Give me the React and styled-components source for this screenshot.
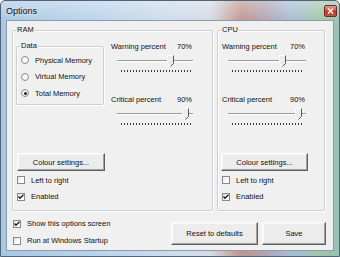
import React from 'react';
import styled, { createGlobalStyle } from 'styled-components';

const Global = createGlobalStyle`
  html, body { margin: 0; padding: 0; }
  body {
    width: 340px; height: 257px; overflow: hidden;
    font-family: "Liberation Sans", Arial, sans-serif;
    font-size: 7.5px; color: #111;
  }
`;

const Window = styled.div`
  width: 340px; height: 257px; box-sizing: border-box;
  display: flex; flex-direction: column;
  border: 1px solid #4f6479;
  border-radius: 5px 5px 0 0;
  background:
    linear-gradient(180deg, rgba(255,255,255,0.35) 0px, rgba(255,255,255,0.05) 18px, rgba(255,255,255,0) 30px),
    linear-gradient(90deg, #a9c7e2 0%, #bcd4ea 30%, #cddceb 50%, #d4dbe4 62%, #c0968c 71%, #b2a2b4 78%, #a6bdd6 86%, #a3c5a6 94%, #98c2b6 100%);
`;

const TitleBar = styled.div`
  height: 19px; flex: none;
  display: flex; align-items: center; justify-content: space-between;
  padding: 0 2px 0 5px;
`;

const Title = styled.span`
  font-size: 9px; color: #111;
  text-shadow: 0 0 4px rgba(255,255,255,0.9);
`;

const CloseBtn = styled.div`
  width: 13px; height: 12px; margin-top: 1px;
  box-sizing: border-box;
  border: 1px solid #6e2b24; border-radius: 2px;
  background: linear-gradient(180deg, #e59a8c 0%, #cf5a48 45%, #b8362a 55%, #c9533f 100%);
  display: flex; align-items: center; justify-content: center;
`;

const Frame = styled.div`
  flex: 1; display: flex;
  padding: 0 5px 5px 5px;
`;

const Client = styled.div`
  flex: 1; box-sizing: border-box;
  background: #f0f0f0;
  border: 1px solid #8a9db0;
  padding: 4px 5px 0 5px;
  display: flex; flex-direction: column;
`;

const GroupsRow = styled.div`
  display: flex; gap: 4px;
`;

const Group = styled.fieldset`
  margin: 0; box-sizing: border-box;
  width: ${p => p.$w}px; height: ${p => p.$h}px;
  border: 1px solid #cbcfd3;
  box-shadow: inset 1px 1px 0 #fff, 1px 1px 0 #fff;
  border-radius: 2px;
  padding: 0 3px 0 3px;
  display: flex; flex-direction: column;
`;

const Legend = styled.legend`
  padding: 0 1px; margin-left: 0;
  line-height: 10px; font-size: 7.5px;
`;

const TopRow = styled.div`
  display: flex; align-items: flex-start;
  height: 118px;
`;

const DataBox = styled.fieldset`
  margin: 6px 0 0 0; box-sizing: border-box;
  width: 88px; height: 64px;
  border: 1px solid #cbcfd3;
  box-shadow: inset 1px 1px 0 #fff, 1px 1px 0 #fff;
  border-radius: 2px;
  padding: 1px 3px 0 3px;
  display: flex; flex-direction: column;
`;

const RadioRow = styled.label`
  display: flex; align-items: center; gap: 6px;
  height: 16.5px; padding-left: 1px;
`;

const RadioDot = styled.span`
  width: 8px; height: 8px; box-sizing: border-box;
  border-radius: 50%;
  border: 1px solid #8a8f93;
  background: radial-gradient(circle, #fff 40%, #e2e2e2 100%);
  display: flex; align-items: center; justify-content: center;
  &::after {
    content: ""; width: 3px; height: 3px; border-radius: 50%;
    background: ${p => (p.$on ? '#1c1c1c' : 'transparent')};
  }
`;

const SliderCol = styled.div`
  margin-left: ${p => p.$ml}px;
  margin-top: 7px;
  display: flex; flex-direction: column;
`;

const LabelRow = styled.div`
  width: ${p => p.$w}px; box-sizing: border-box;
  display: flex; justify-content: space-between;
  padding-right: 5px;
  line-height: 9px;
`;

const SliderBox = styled.div`
  position: relative;
  width: ${p => p.$w}px; height: 24px;
  margin-left: 2px;
  display: flex; flex-direction: column;
`;

const Track = styled.div`
  margin: 9px 4px 0 4px;
  height: 0;
  border-top: 1px solid #9b9b9b;
  border-bottom: 1px solid #fff;
`;

const Ticks = styled.div`
  margin: 8px 6px 0 8px;
  height: 2px;
  background: repeating-linear-gradient(90deg, #3a3a3a 0 1px, transparent 1px 3px);
`;

const ThumbWrap = styled.div`
  position: absolute; top: 4px;
  width: 7px; height: 12px;
`;

const Btn = styled.button`
  font-family: "Liberation Sans", Arial, sans-serif;
  font-size: 7.5px; color: #111;
  box-sizing: border-box;
  padding: 0;
  background: #ececec;
  border: 1px solid;
  border-color: #fdfdfd #5f5f5f #5f5f5f #fdfdfd;
  box-shadow: inset -1px -1px 0 #a3a3a3, inset 1px 1px 0 #f7f7f7;
  width: ${p => p.$w}px; height: ${p => p.$h || 18}px;
  margin-left: ${p => p.$ml || 0}px;
  margin-bottom: ${p => p.$mb || 0}px;
  flex: none;
`;

const CheckRow = styled.label`
  display: flex; align-items: center; gap: 6px;
  height: ${p => p.$h || 16.5}px;
  padding-left: ${p => p.$pl || 0}px;
`;

const CheckBox = styled.span`
  width: 8px; height: 8px; box-sizing: border-box;
  border: 1px solid #868a8e;
  background: linear-gradient(135deg, #e4e4e4 0%, #fff 70%);
  display: flex; align-items: center; justify-content: center;
`;

const Footer = styled.div`
  display: flex; justify-content: space-between; align-items: flex-start;
  margin-top: 4px;
`;

const FooterChecks = styled.div`
  display: flex; flex-direction: column;
  padding-left: 1px;
`;

const FooterButtons = styled.div`
  display: flex; gap: 4px;
  margin-top: 7px; margin-right: 2px;
`;

const Spacer = styled.div`
  height: 20px;
`;

const CheckMark = () => (
  <svg width="6" height="6" viewBox="0 0 6 6">
    <polyline points="0.5,2.5 2,4.2 5.5,0.8" fill="none" stroke="#1a1a1a" strokeWidth="1.3" />
  </svg>
);

const Thumb = () => (
  <svg width="7" height="12" viewBox="0 0 7 12">
    <path d="M0.5 0.5 H6.5 V8.5 L3.5 11.5 L0.5 8.5 Z" fill="#ececec" stroke="#fff" strokeWidth="1" />
    <path d="M6.5 0.5 V8.5 L3.5 11.5" fill="none" stroke="#5a5a5a" strokeWidth="1" />
  </svg>
);

const Check = ({ on, children, h, pl }) => (
  <CheckRow $h={h} $pl={pl}>
    <CheckBox>{on && <CheckMark />}</CheckBox>
    <span>{children}</span>
  </CheckRow>
);

const Slider = ({ label, value, w }) => {
  const trackW = w - 8;
  const left = Math.round(4 + (value / 100) * trackW - 3.5);
  return (
    <>
      <LabelRow $w={w + 2}>
        <span>{label}</span>
        <span>{value}%</span>
      </LabelRow>
      <SliderBox $w={w}>
        <Track />
        <Ticks />
        <ThumbWrap style={{ left: `${left}px` }}>
          <Thumb />
        </ThumbWrap>
      </SliderBox>
    </>
  );
};

const Sliders = ({ w, ml }) => (
  <SliderCol $ml={ml}>
    <Slider label="Warning percent" value={70} w={w} />
    <Spacer />
    <Slider label="Critical percent" value={90} w={w} />
  </SliderCol>
);

export default function App() {
  return (
    <>
      <Global />
      <Window>
        <TitleBar>
          <Title>Options</Title>
          <CloseBtn>
            <svg width="7" height="6" viewBox="0 0 7 6">
              <path d="M1 0.5 L6 5.5 M6 0.5 L1 5.5" stroke="#fff" strokeWidth="1.4" />
            </svg>
          </CloseBtn>
        </TitleBar>
        <Frame>
          <Client>
            <GroupsRow>
              <Group $w={201} $h={186}>
                <Legend>RAM</Legend>
                <TopRow>
                  <DataBox>
                    <Legend>Data</Legend>
                    <RadioRow><RadioDot /><span>Physical Memory</span></RadioRow>
                    <RadioRow><RadioDot /><span>Virtual Memory</span></RadioRow>
                    <RadioRow><RadioDot $on /><span>Total Memory</span></RadioRow>
                  </DataBox>
                  <Sliders w={84} ml={7} />
                </TopRow>
                <Btn $w={88} $ml={1} $mb={1}>Colour settings...</Btn>
                <Check pl={1}>Left to right</Check>
                <Check on pl={1}>Enabled</Check>
              </Group>
              <Group $w={108} $h={186}>
                <Legend>CPU</Legend>
                <TopRow>
                  <Sliders w={86} ml={1} />
                </TopRow>
                <Btn $w={87} $mb={1}>Colour settings...</Btn>
                <Check pl={1}>Left to right</Check>
                <Check on pl={1}>Enabled</Check>
              </Group>
            </GroupsRow>
            <Footer>
              <FooterChecks>
                <Check on h={17}>Show this options screen</Check>
                <Check h={17}>Run at Windows Startup</Check>
              </FooterChecks>
              <FooterButtons>
                <Btn $w={87} $h={23}>Reset to defaults</Btn>
                <Btn $w={64} $h={23}>Save</Btn>
              </FooterButtons>
            </Footer>
          </Client>
        </Frame>
      </Window>
    </>
  );
}
